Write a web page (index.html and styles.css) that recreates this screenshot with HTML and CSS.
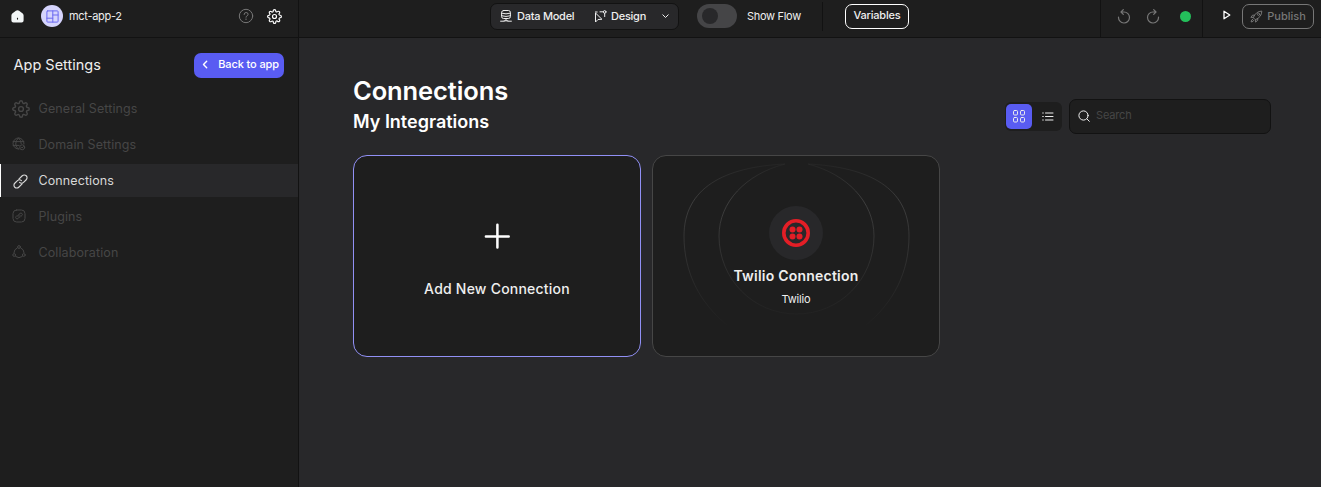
FILE: index.html
```html
<!DOCTYPE html>
<html lang="en">
<head>
<meta charset="utf-8">
<title>Connections</title>
<link rel="stylesheet" href="styles.css">
</head>
<body>
<svg class="defs" width="0" height="0">
  <symbol id="gear" viewBox="0 0 24 24"><circle cx="12" cy="12" r="3.2"/><path d="M19.4 15a1.65 1.65 0 0 0 .33 1.82l.06.06a2 2 0 0 1 0 2.83 2 2 0 0 1-2.83 0l-.06-.06a1.65 1.65 0 0 0-1.82-.33 1.65 1.65 0 0 0-1 1.51V21a2 2 0 0 1-2 2 2 2 0 0 1-2-2v-.09A1.65 1.65 0 0 0 9 19.4a1.65 1.65 0 0 0-1.82.33l-.06.06a2 2 0 0 1-2.83 0 2 2 0 0 1 0-2.83l.06-.06a1.65 1.65 0 0 0 .33-1.82 1.65 1.65 0 0 0-1.51-1H3a2 2 0 0 1-2-2 2 2 0 0 1 2-2h.09A1.65 1.65 0 0 0 4.6 9a1.65 1.65 0 0 0-.33-1.82l-.06-.06a2 2 0 0 1 0-2.83 2 2 0 0 1 2.83 0l.06.06a1.65 1.65 0 0 0 1.82.33H9a1.65 1.65 0 0 0 1-1.51V3a2 2 0 0 1 2-2 2 2 0 0 1 2 2v.09a1.65 1.65 0 0 0 1 1.51 1.65 1.65 0 0 0 1.82-.33l.06-.06a2 2 0 0 1 2.83 0 2 2 0 0 1 0 2.83l-.06.06a1.65 1.65 0 0 0-.33 1.82V9a1.65 1.65 0 0 0 1.51 1H21a2 2 0 0 1 2 2 2 2 0 0 1-2 2h-.09a1.65 1.65 0 0 0-1.51 1z"/></symbol>
</svg>
<div class="app">
  <header class="topbar">
    <div class="brand">
      <svg class="home" width="13" height="13" viewBox="0 0 13 13"><path d="M.4 5.6Q.4 4.4 1.3 3.6L4.9.7Q6.5-.3 8.1.7l3.6 2.9q.9.8.9 2v4.8q0 2-2 2H2.4q-2 0-2-2z" fill="#f3f6f7"/><path d="M6.5 7.8v1.8" stroke="#1e1e1e" stroke-width="1.1"/></svg>
      <span class="avatar"><svg class="line" width="13" height="13" viewBox="0 0 13 13"><rect x=".9" y=".9" width="11.2" height="11.2" rx=".8"/><path d="M6.8.9v11.2M.9 8.2h5.9M6.8 5h5.3"/></svg></span>
      <span class="app-name">mct-app-2</span>
      <svg class="line help" width="16" height="16" viewBox="0 0 16 16"><circle cx="8" cy="8" r="6.7"/><path d="M6.1 6.5q0-2 2-2t2 1.8q0 1-1.1 1.6-1 .5-1 1.3M8 10.9v.7"/></svg>
      <svg class="line top-gear" width="15" height="15"><use href="#gear"/></svg>
    </div>
    <div class="modes">
      <svg class="line" width="12" height="12" viewBox="0 0 12 12"><rect x="1.6" y=".5" width="8.8" height="8" rx="2"/><path d="M1.6 3.2q4.4 1.4 8.8 0M1.6 5.8q4.4 1.4 8.8 0M6 8.5v2.2M.6 11.2h3.6M7.8 11.2h3.6M4.2 10.8h3.6"/></svg>
      <span class="mode-data">Data Model</span>
      <svg class="line design-icon" width="13" height="13" viewBox="0 0 13 13"><path d="M1.500 3.400v8.600l2.500-2.500 3.500-.2zM1.400 2h1.800M6 1.800h3.200M10.7 3.400v3.200"/><circle cx="10.700" cy="1.900" r="1.300"/></svg>
      <span class="mode-design">Design</span>
      <svg class="line chevron" width="7" height="5" viewBox="0 0 7 5"><path d="M.8.8l2.7 2.7L6.2.8"/></svg>
    </div>
    <span class="switch"><i class="knob"></i></span>
    <span class="flow-label">Show Flow</span>
    <i class="short-rule"></i>
    <button class="outline variables">Variables</button>
    <div class="history">
      <svg class="line" width="14" height="15" viewBox="0 0 14 15"><path d="M1.5 8.2A5.500 5.500 0 1 0 7 3H4.500M6.300.7L4 3l2.300 2.300"/></svg>
      <svg class="line" width="14" height="15" viewBox="0 0 14 15"><path d="M12.500 8.200A5.500 5.500 0 1 1 7 3h2.500M7.700.7L10 3 7.700 5.300"/></svg>
      <i class="status"></i>
    </div>
    <div class="publish-area">
      <svg class="line play" width="8" height="10" viewBox="0 0 8 10"><path d="M1 1.2v7.6L6.8 5z"/></svg>
      <button class="outline publish">
        <svg class="line" width="13" height="13" viewBox="0 0 13 13"><path d="M3.4 7.3Q6 1.2 11.8 1.1 11.8 7 5.7 9.6zM4.4 5.2H2.5L.9 7.4l2.5-.1M7.7 8.6v1.8l-2.2 1.7.2-2.5M2.7 9.2Q1.3 9.6 1.1 12q2.3-.2 2.8-1.6"/><circle cx="8.6" cy="4.3" r="1.1"/></svg>
        <span>Publish</span>
      </button>
    </div>
  </header>
  <div class="body">
    <aside class="sidebar">
      <div class="side-head">
        <h2 class="side-title">App Settings</h2>
        <button class="back"><svg class="line" width="6" height="9" viewBox="0 0 6 9"><path d="M4.7 1.2L1.5 4.5l3.2 3.3"/></svg><span>Back to app</span></button>
      </div>
      <nav class="nav">
        <a class="item"><span class="ico"><svg class="line nudge" width="18" height="18" viewBox="0 0 18 18"><use href="#gear"/></svg></span>General Settings</a>
        <a class="item"><span class="ico"><svg class="line" width="14" height="14" viewBox="0 0 14 14"><path d="M7 12A5.5 5.5 0 1 1 12 7M1.1 4.6h10.8M1.1 8.4h6M6.5.9Q3.5 3.5 3.7 7t2.7 5M6.5.9Q9.3 3.3 9.3 6.8"/><circle cx="10.2" cy="10.3" r="2.5"/><path d="M9.1 10.3l.8.8 1.5-1.5"/></svg></span>Domain Settings</a>
        <a class="item active"><span class="ico"><svg class="line nudge" width="17" height="17" viewBox="0 0 17 17"><g class="link" transform="rotate(-45 8.5 8.5)"><path d="M8 11.300H3.200a2.800 2.800 0 0 1-2.800-2.800 2.800 2.800 0 0 1 2.800-2.800H7a2.800 2.800 0 0 1 2.800 2.800"/><path d="M9 5.700h4.800a2.800 2.800 0 0 1 2.800 2.800 2.800 2.800 0 0 1-2.800 2.800H10a2.800 2.800 0 0 1-2.800-2.800"/></g></svg></span>Connections</a>
        <a class="item"><span class="ico"><svg class="line" width="14" height="14" viewBox="0 0 14 14"><rect x="1" y="1" width="12" height="12" rx="3.6"/><path d="M6.6 8.3Q5.3 7.5 6.2 6.2L8 4.4q1-.8 1.9.1t.1 1.9L8.9 7.5M7.4 5.7Q8.7 6.5 7.8 7.8L6 9.6q-1 .8-1.9-.1T4 7.6L5.1 6.5"/></svg></span>Plugins</a>
        <a class="item"><span class="ico"><svg class="line" width="14" height="14" viewBox="0 0 14 14"><circle cx="7" cy="2" r="1.4"/><circle cx="2.2" cy="10" r="1.4"/><circle cx="11.8" cy="10" r="1.4"/><path d="M5.2 2.9Q2 4.2 1.9 7.8M8.8 2.9Q12 4.2 12.1 7.8M3.7 11.6q3.3 2.4 6.6 0"/></svg></span>Collaboration</a>
      </nav>
    </aside>
    <main class="main">
      <div class="page-head">
        <div class="titles">
          <h1 class="title">Connections</h1>
          <h2 class="subtitle">My Integrations</h2>
        </div>
        <div class="tools">
          <div class="views">
            <span class="view on"><svg class="line" width="12" height="13" viewBox="0 0 12 13"><rect x=".5" y=".5" width="4" height="4.500" rx="1.100"/><rect x="7.500" y=".5" width="4" height="4.500" rx="1.100"/><rect x=".5" y="7.500" width="4" height="4.500" rx="1.100"/><rect x="7.500" y="7.500" width="4" height="4.500" rx="1.100"/></svg></span>
            <span class="view list"><svg class="line" width="12" height="9" viewBox="0 0 12 9"><path d="M3.500 1h7.500M3.500 4.500h7.500M3.500 8h7.500M.7 1h.6M.7 4.500h.6M.7 8h.6"/></svg></span>
          </div>
          <label class="search"><svg class="line" width="12" height="12" viewBox="0 0 12 12"><circle cx="5.5" cy="5.5" r="4.6"/><path d="M9 9l2.3 2.3"/></svg><span>Search</span></label>
        </div>
      </div>
      <div class="cards">
        <section class="card add">
          <svg class="line plus" width="26" height="26" viewBox="0 0 26 26"><path d="M13.4 1.8v22.600M1.900 13.400h22.800"/></svg>
          <h3 class="add-label">Add New Connection</h3>
        </section>
        <section class="card twilio">
          <svg class="rings" width="286" height="200" viewBox="0 0 286 200">
            <defs><linearGradient id="fade" gradientUnits="userSpaceOnUse" x1="0" y1="8" x2="0" y2="174"><stop offset="0" stop-color="#484848" stop-opacity=".15"/><stop offset=".22" stop-color="#484848" stop-opacity=".75"/><stop offset="1" stop-color="#484848" stop-opacity="0"/></linearGradient></defs>
            <path d="M132 8C93 18 66 46 66 80c0 43 34 78 77.500 78S221 123 221 80c0-34-27-62-66-72"/>
            <path d="M132 8C71 11 31 32 31 80c0 37 16 67 43 89M155 8c61 3 101 24 101 72 0 37-16 67-43 89"/>
          </svg>
          <span class="logo"><svg width="28" height="28" viewBox="0 0 28 28" fill="#e31e26"><circle cx="14" cy="14" r="12.2" fill="none" stroke="#e31e26" stroke-width="3.6"/><circle cx="10.5" cy="10.5" r="3"/><circle cx="17.5" cy="10.5" r="3"/><circle cx="10.5" cy="17.5" r="3"/><circle cx="17.5" cy="17.5" r="3"/></svg></span>
          <h3 class="card-title">Twilio Connection</h3>
          <p class="card-sub">Twilio</p>
        </section>
      </div>
    </main>
  </div>
</div>
</body>
</html>
```
FILE: styles.css
```css
* { box-sizing: border-box; margin: 0; }
body { background: #28282a; color: #eee; font-family: Inter, sans-serif; font-size: 11px; }
button { font-family: inherit; padding: 0; }
svg { display: block; flex: none; }
span, h1, h2, h3 { white-space: nowrap; }
.defs { display: none; }
.line { fill: none; stroke: currentColor; stroke-linecap: round; stroke-linejoin: round; }
.app { display: flex; flex-direction: column; width: 1321px; height: 487px; overflow: hidden; }

.topbar { display: flex; height: 38px; background: #1e1e1e; border-bottom: 1px solid #121212; flex: none; }
.brand { display: flex; align-items: center; width: 299px; height: 37px; padding: 0 0 5px 11px; border-right: 1px solid #121212; }
.avatar { display: flex; align-items: center; justify-content: center; width: 22px; height: 22px; margin: 0 6px 0 17px; border-radius: 50%; background: #d5d4fd; color: #6a69f0; }
.app-name { width: 169px; padding-bottom: 1px; letter-spacing: -.3px; }
.help { color: #777; margin-right: 13px; }
.top-gear { color: #fff; }
.top-gear use, .nudge use { stroke-width: 1.9; }
.modes { display: flex; align-items: center; width: 189px; height: 27px; margin: 3px 18px 0 191px; padding: 0 8px 1px 9px; border: 1px solid #121212; border-radius: 7px; background: #28282a; font-weight: 500; }
.mode-data { width: 77px; margin-left: 5px; padding-bottom: 1px; letter-spacing: -.25px; }
.mode-design { width: 51px; margin-left: 4px; padding-bottom: 1px; letter-spacing: -.25px; }
.switch { display: flex; align-items: center; width: 40px; height: 24px; margin-top: 4px; padding-left: 5px; border-radius: 12px; background: #454547; }
.knob { width: 16px; height: 16px; border-radius: 50%; background: #28282a; }
.flow-label { width: 75px; margin: 9px 0 0 10px; line-height: 14px; letter-spacing: -.3px; }
.short-rule { width: 1px; height: 29px; margin-top: 2px; background: #121212; }
.outline { display: flex; align-items: center; justify-content: center; height: 25px; margin-top: 4px; border: 1px solid #fff; border-radius: 7px; background: none; color: #eee; font-size: 11px; font-weight: 500; letter-spacing: -.18px; }
.variables { width: 64px; margin-left: 22px; padding-bottom: 3px; }
.history { display: flex; align-items: center; width: 103px; height: 37px; margin-left: 191px; padding: 0 0 5px 16px; gap: 15px; border: solid #121212; border-width: 0 1px; color: #777; }
.history .line { stroke-width: 1.2; }
.status { width: 11px; height: 11px; margin-left: 5px; border-radius: 50%; background: #24c05b; }
.publish-area { display: flex; }
.play { margin: 10px 11px 0 20px; color: #fff; stroke-width: 1.3; }
.publish { width: 72px; gap: 4px; padding-bottom: 1px; border-color: #777; color: #777; letter-spacing: 0; }
.publish span { padding-bottom: 1px; }

.body { display: flex; flex: 1; }
.sidebar { width: 299px; background: #1e1e1e; border-right: 1px solid #121212; }
.side-head { display: flex; align-items: center; justify-content: space-between; height: 54px; padding: 0 14px 0 13.5px; }
.side-title { padding-bottom: 2px; font-size: 14.5px; font-weight: 400; }
.back { display: flex; align-items: center; justify-content: space-between; width: 90px; height: 25px; padding: 0 5px 2px 8px; border: 0; border-radius: 7px; background: #595cf2; color: #fff; font-size: 11px; font-weight: 500; letter-spacing: -.1px; }
.back svg { stroke-width: 1.4; }
.nav { display: flex; flex-direction: column; gap: 3px; }
.item { display: flex; align-items: center; height: 33px; padding-left: 12px; font-size: 12.5px; color: #464646; letter-spacing: .1px; }
.item.active { background: #28282a; color: #d8d8d8; border-left: 1px solid #fff; padding-left: 11px; }
.ico { display: flex; width: 26.5px; }
.ico svg { margin-top: -1px; }
.ico .nudge { margin-top: 1px; }
.link { stroke-width: 1.15; }

.main { flex: 1; padding: 38px 50px 0 54px; }
.page-head { display: flex; justify-content: space-between; height: 79px; }
.title { padding-top: 1px; font-size: 25.5px; line-height: 28px; font-weight: 600; letter-spacing: -.1px; color: #fff; }
.subtitle { margin-top: 5px; font-size: 18px; line-height: 24px; font-weight: 600; color: #fff; }
.tools { display: flex; align-items: center; gap: 7px; height: 35px; margin-top: 23px; }
.views { display: flex; align-items: center; width: 57px; height: 29px; padding: 0 1px; border-radius: 6px; background: #1e1e1e; }
.view { display: flex; align-items: center; justify-content: center; width: 29px; height: 25px; padding-bottom: 1px; }
.view.on { width: 26px; border-radius: 5px; background: #595cf2; }
.view.list { padding-left: 2px; }
.search { display: flex; align-items: center; width: 202px; height: 35px; padding: 0 0 1px 8px; gap: 6px; border: 1px solid #121212; border-radius: 7px; background: #1e1e1e; letter-spacing: -.15px; }
.search span { color: #464646; padding-bottom: 2px; }
.cards { display: flex; gap: 11px; }
.card { display: flex; flex-direction: column; align-items: center; position: relative; width: 288px; height: 202px; border: 1px solid #464646; border-radius: 14px; background: #1e1e1e; }
.add { border-color: #9190f5; padding-top: 67px; }
.plus { stroke-width: 2.5; color: #fff; }
.add-label { margin-top: 31px; font-size: 14px; line-height: 18px; font-weight: 500; letter-spacing: .22px; }
.rings { position: absolute; left: 0; top: 0; fill: none; stroke: url(#fade); stroke-width: 1; }
.logo { display: flex; align-items: center; justify-content: center; width: 54px; height: 54px; margin-top: 50px; border-radius: 50%; background: #28282a; position: relative; }
.card-title { position: relative; margin-top: 7px; font-size: 14px; line-height: 18px; font-weight: 600; letter-spacing: .22px; }
.card-sub { position: relative; margin-top: 7px; font-size: 11px; line-height: 14px; letter-spacing: -.15px; }
```
